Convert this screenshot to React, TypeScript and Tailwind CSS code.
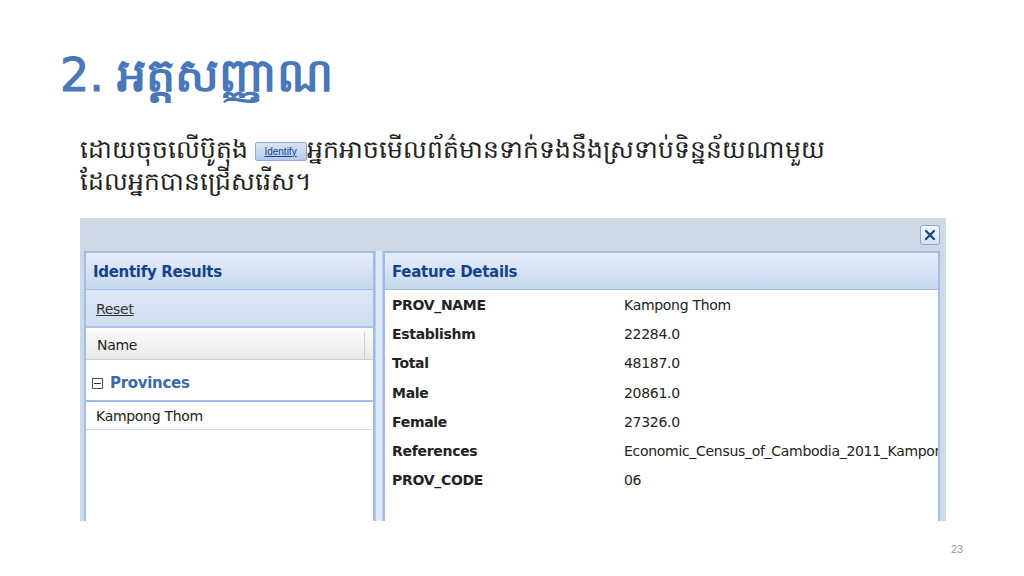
import React from 'react';

const rows = [
  ['PROV_NAME', 'Kampong Thom'],
  ['Establishm', '22284.0'],
  ['Total', '48187.0'],
  ['Male', '20861.0'],
  ['Female', '27326.0'],
  ['References', 'Economic_Census_of_Cambodia_2011_Kampong_Thom'],
  ['PROV_CODE', '06'],
];

function App() {
  return (
    <div className="w-[1024px] h-[576px] bg-white overflow-hidden relative font-['Noto_Sans',sans-serif]">
      {/* title */}
      <div className="pl-[60px] pt-[44px] h-[132px]">
        <h1 className="text-[46px] leading-[58px] text-[#4a77b8] flex items-baseline">
          <span className="font-['DejaVu_Sans',sans-serif] font-normal mr-[13px] [-webkit-text-stroke:1px_#4a77b8]">2.</span>
          <span className="font-bold">អត្តសញ្ញាណ</span>
        </h1>
      </div>

      {/* paragraph */}
      <div className="pl-[80px] text-[25px] leading-[32px] text-[#222]">
        ដោយចុចលើប៊ូតុង{' '}
        <span className="inline-block align-middle w-[52px] h-[19px] leading-[17px] text-center text-[10px] underline text-[#15428b] bg-gradient-to-b from-[#dbe6f5] to-[#b3c9ea] border border-[#8eaad6] rounded-[2px] font-['Liberation_Sans',sans-serif]">
          Identify
        </span>
        អ្នកអាចមើលព័ត៌មានទាក់ទងនឹងស្រទាប់ទិន្នន័យណាមួយ
        <br />
        ដែលអ្នកបានជ្រើសរើស។
      </div>

      {/* window screenshot */}
      <div className="absolute left-[80px] top-[218px] w-[866px] h-[303px] bg-[#ced9e7] flex flex-col overflow-hidden font-['DejaVu_Sans',sans-serif]">
        <div className="h-[33px] flex items-center justify-end pr-[6px] shrink-0">
          <div className="w-[20px] h-[20px] rounded-[3px] border border-[#8aa6cf] bg-gradient-to-b from-[#f4f8fd] to-[#d6e2f2] flex items-center justify-center">
            <svg width="12" height="12" viewBox="0 0 12 12">
              <path d="M2 2 L10 10 M10 2 L2 10" stroke="#15428b" strokeWidth="2.2" strokeLinecap="round" />
            </svg>
          </div>
        </div>
        <div className="flex flex-1 pl-[4px] pr-[6px]">
          {/* left panel */}
          <div className="w-[291px] border-2 border-b-0 border-[#9fbde6] bg-white flex flex-col">
            <div className="h-[37px] shrink-0 bg-gradient-to-b from-[#e6eefa] to-[#c6d7ef] border-b border-[#9fbde6] flex items-center pl-[7px] pt-[2px] text-[15px] font-bold text-[#15428b] tracking-[-0.3px]">
              Identify Results
            </div>
            <div className="h-[38px] shrink-0 bg-gradient-to-b from-[#dde8f6] to-[#d0def1] border-b-2 border-[#a9c4e8] flex items-center pl-[10px] pt-[2px] text-[14px] text-[#333] underline tracking-[-0.3px]">
              Reset
            </div>
            <div className="h-[30px] shrink-0 mt-[2px] bg-gradient-to-b from-[#fbfbfb] to-[#e9e9e9] border-b border-[#d0d0d0] flex items-center pl-[11px] pt-[2px] text-[14px] text-[#222] tracking-[-0.3px]">
              <span className="flex-1">Name</span>
              <span className="w-[9px] h-full border-l border-[#cfcfcf]" />
            </div>
            <div className="h-[42px] shrink-0 border-b-2 border-[#9fbde6] flex items-center pl-[6px] pt-[6px] text-[15px] font-bold text-[#3c6aa8] tracking-[-0.3px]">
              <span className="w-[11px] h-[11px] border border-[#555] mr-[7px] flex items-center justify-center">
                <span className="w-[7px] h-[1px] bg-[#333]" />
              </span>
              Provinces
            </div>
            <div className="h-[28px] shrink-0 border-b border-[#c9dbf2] flex items-center pl-[10px] pt-[2px] text-[14px] text-[#222] tracking-[-0.3px]">
              Kampong Thom
            </div>
            <div className="flex-1" />
          </div>
          {/* splitter */}
          <div className="w-[8px] bg-[#dfe8f6] border-x border-[#b9cde9]" />
          {/* right panel */}
          <div className="flex-1 border-2 border-b-0 border-[#9fbde6] bg-white flex flex-col min-w-0">
            <div className="h-[37px] shrink-0 bg-gradient-to-b from-[#e6eefa] to-[#c6d7ef] border-b border-[#9fbde6] flex items-center pl-[7px] pt-[2px] text-[15px] font-bold text-[#15428b] tracking-[-0.3px]">
              Feature Details
            </div>
            <div className="pt-[1px] overflow-hidden">
              {rows.map(([k, v]) => (
                <div key={k} className="h-[29.2px] flex items-center text-[14px] text-[#222] tracking-[-0.3px] whitespace-nowrap">
                  <span className="w-[239px] shrink-0 pl-[7px] font-bold">{k}</span>
                  <span>{v}</span>
                </div>
              ))}
            </div>
          </div>
        </div>
      </div>

      <div className="absolute left-[951px] top-[541px] text-[11px] text-[#999] font-['Liberation_Sans',sans-serif]">23</div>
    </div>
  );
}

export default App;
